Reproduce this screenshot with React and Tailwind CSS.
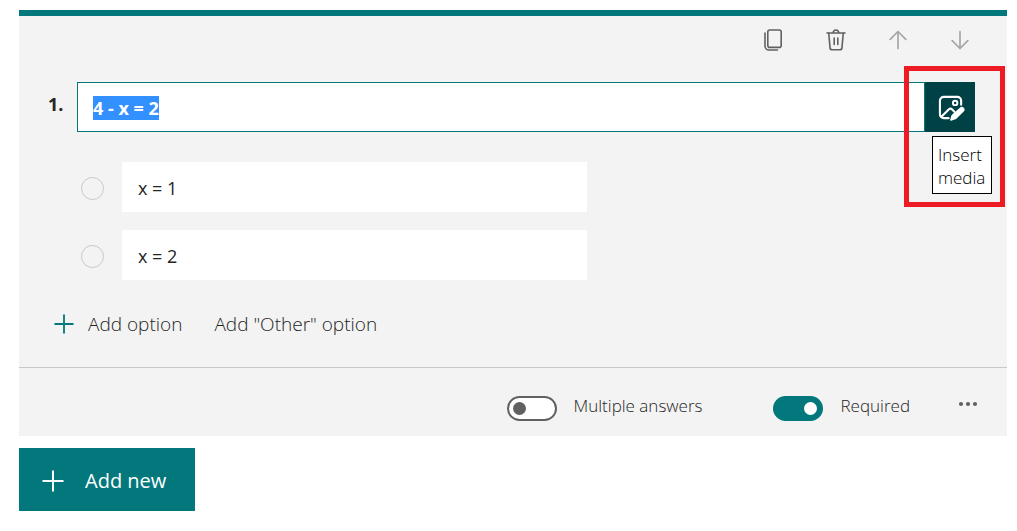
import React, { useEffect, useRef, useState } from 'react';

const CopyIcon = () => (
  <svg width="20" height="22" viewBox="0 0 20 22" fill="none" stroke="#616161" strokeWidth="1.6" strokeLinecap="round" strokeLinejoin="round">
    <rect x="3.8" y="1" width="13.4" height="17.4" rx="2" />
    <path d="M1 4v13a4 4 0 0 0 4 4h8.5" />
  </svg>
);

const TrashIcon = () => (
  <svg width="20" height="22" viewBox="0 0 20 22" fill="none" stroke="#616161" strokeWidth="1.6" strokeLinecap="round" strokeLinejoin="round">
    <path d="M1 4h18" />
    <path d="M7.25 3.8a2.75 2.75 0 0 1 5.5 0" />
    <path d="M2.75 4.2l1.3 14.7a2 2 0 0 0 2 1.85h7.9a2 2 0 0 0 2-1.85l1.3-14.7" />
    <path d="M8.2 9v6.5M11.8 9v6.5" />
  </svg>
);

const ArrowIcon = ({ className }) => (
  <svg className={className} width="18" height="20" viewBox="0 0 18 20" fill="none" stroke="#a6a6a6" strokeWidth="1.7" strokeLinecap="round" strokeLinejoin="round">
    <path d="M9 18.5v-17M1.2 9.3L9 1.5 16.8 9.3" />
  </svg>
);

const PlusIcon = ({ className }) => (
  <svg className={className} viewBox="0 0 22 22" fill="none" stroke="currentColor" strokeWidth="2">
    <path d="M11 0.5v21M0.5 11h21" />
  </svg>
);

const MediaIcon = () => (
  <svg width="27" height="27" viewBox="0 0 28 28" fill="none" stroke="#fff" strokeWidth="2.2" strokeLinecap="round" strokeLinejoin="round">
    <path d="M24 10V6a4 4 0 0 0-4-4H6a4 4 0 0 0-4 4v14a4 4 0 0 0 4 4h5" />
    <circle cx="17.8" cy="8.2" r="2.3" strokeWidth="2" />
    <path d="M3.5 22.5l7.6-7.4a2.6 2.6 0 0 1 3.6 0l2.3 2.2" />
    <path d="M22.7 13.1a2.8 2.8 0 0 1 4 4l-7.6 7.4c-.5.5-1.1.8-1.7 1l-3.8 1.1c-.6.2-1.2-.4-1-1l1.1-3.7c.2-.7.5-1.2 1-1.7z" fill="#fff" stroke="none" />
  </svg>
);

const MoreIcon = () => (
  <svg width="20" height="6" viewBox="0 0 20 6" fill="#616161">
    <circle cx="3" cy="3" r="2.1" />
    <circle cx="10" cy="3" r="2.1" />
    <circle cx="17" cy="3" r="2.1" />
  </svg>
);

const Toggle = ({ id, label, checked, onChange }) => (
  <div className="flex items-center gap-[17px]">
    <input
      id={id}
      type="checkbox"
      role="switch"
      checked={checked}
      onChange={(e) => onChange(e.target.checked)}
      className="flex h-[25px] w-[50px] shrink-0 cursor-pointer appearance-none items-center rounded-full border-2 border-[#616161] bg-white px-1 before:size-[13px] before:rounded-full before:bg-[#616161] checked:justify-end checked:border-[#03787c] checked:bg-[#03787c] checked:before:bg-white"
    />
    <label htmlFor={id} className="cursor-pointer pb-1 text-[17px] whitespace-nowrap">{label}</label>
  </div>
);

const App = () => {
  const [question, setQuestion] = useState('4 - x = 2');
  const [options, setOptions] = useState(['x = 1', 'x = 2']);
  const [multiple, setMultiple] = useState(false);
  const [required, setRequired] = useState(true);
  const questionRef = useRef(null);

  useEffect(() => {
    questionRef.current.focus();
    questionRef.current.select();
  }, []);

  const updateOption = (index, value) => {
    setOptions(options.map((opt, i) => (i === index ? value : opt)));
  };

  return (
    <main className="min-h-screen bg-white pt-[10px] pr-[10px] pl-[19px] font-['Open_Sans','Noto_Sans',sans-serif] text-[18px] leading-6 font-light text-[#242424]">
      <section className="border-t-6 border-[#03787c] bg-[#f3f3f3]">
        <div className="flex h-12 justify-end pr-4">
          <button aria-label="Copy question" className="flex w-[62px] items-center justify-center"><CopyIcon /></button>
          <button aria-label="Delete question" className="flex w-[62px] items-center justify-center"><TrashIcon /></button>
          <button aria-label="Move up" className="flex w-[62px] items-center justify-center"><ArrowIcon /></button>
          <button aria-label="Move down" className="flex w-[62px] items-center justify-center"><ArrowIcon className="rotate-180" /></button>
        </div>

        <div className="flex pt-[18px] pr-8 pl-[29px]">
          <label htmlFor="question" className="w-[29px] pt-[10px] font-bold">1.</label>
          <input
            id="question"
            ref={questionRef}
            value={question}
            onChange={(e) => setQuestion(e.target.value)}
            className="h-[50px] min-w-0 flex-1 border border-[#03787c] bg-white px-[15px] pt-[2px] font-bold outline-none selection:bg-[#3390ff] selection:text-white"
          />
          <div className="relative">
            <button aria-label="Insert media" aria-describedby="media-tip" className="flex size-[50px] items-center justify-center bg-[#004146] pt-[2px] pl-[3px]">
              <MediaIcon />
            </button>
            <div id="media-tip" role="tooltip" className="absolute top-[54px] left-[7px] h-[58px] w-[60px] border border-black bg-white px-[5px] py-[6px] text-[17px] leading-[23px] text-black">
              Insert media
            </div>
            <div className="pointer-events-none absolute -top-4 -left-[21px] h-[141px] w-[101px] border-5 border-[#ed1c24]" />
          </div>
        </div>

        <div className="flex flex-col gap-[18px] pt-[30px] pr-8 pl-[62px]">
          {options.map((opt, i) => (
            <div key={i} className="flex items-center gap-[18px]">
              <input
                type="radio"
                name="answer"
                aria-label={`Mark option ${i + 1} as correct`}
                className="mt-[2px] size-[23px] shrink-0 appearance-none rounded-full border border-[#c8c8c8]"
              />
              <input
                value={opt}
                aria-label={`Option ${i + 1}`}
                onChange={(e) => updateOption(i, e.target.value)}
                className="h-[50px] w-full max-w-[465px] bg-white px-4 pt-[2px] font-normal outline-none"
              />
            </div>
          ))}
        </div>

        <div className="flex items-center gap-8 pt-8 pb-[31px] pl-[35px] text-[19px]">
          <button onClick={() => setOptions([...options, ''])} className="flex items-center gap-[14px]">
            <PlusIcon className="size-5 text-[#03787c]" />
            Add option
          </button>
          <button>Add "Other" option</button>
        </div>

        <div className="flex h-[69px] items-center justify-end border-t border-[#c8c8c8] pt-3 pr-[21px]">
          <Toggle id="multiple" label="Multiple answers" checked={multiple} onChange={setMultiple} />
          <div className="w-[71px]" />
          <Toggle id="required" label="Required" checked={required} onChange={setRequired} />
          <button aria-label="More settings" className="ml-10 flex h-8 w-9 justify-center pt-[9px]"><MoreIcon /></button>
        </div>
      </section>

      <button className="mt-3 flex h-[63px] w-[176px] items-center gap-[21px] bg-[#03787c] pt-[2px] pl-[23px] text-[20px] font-normal whitespace-nowrap text-white">
        <PlusIcon className="size-[22px]" />
        Add new
      </button>
    </main>
  );
};

export default App;
